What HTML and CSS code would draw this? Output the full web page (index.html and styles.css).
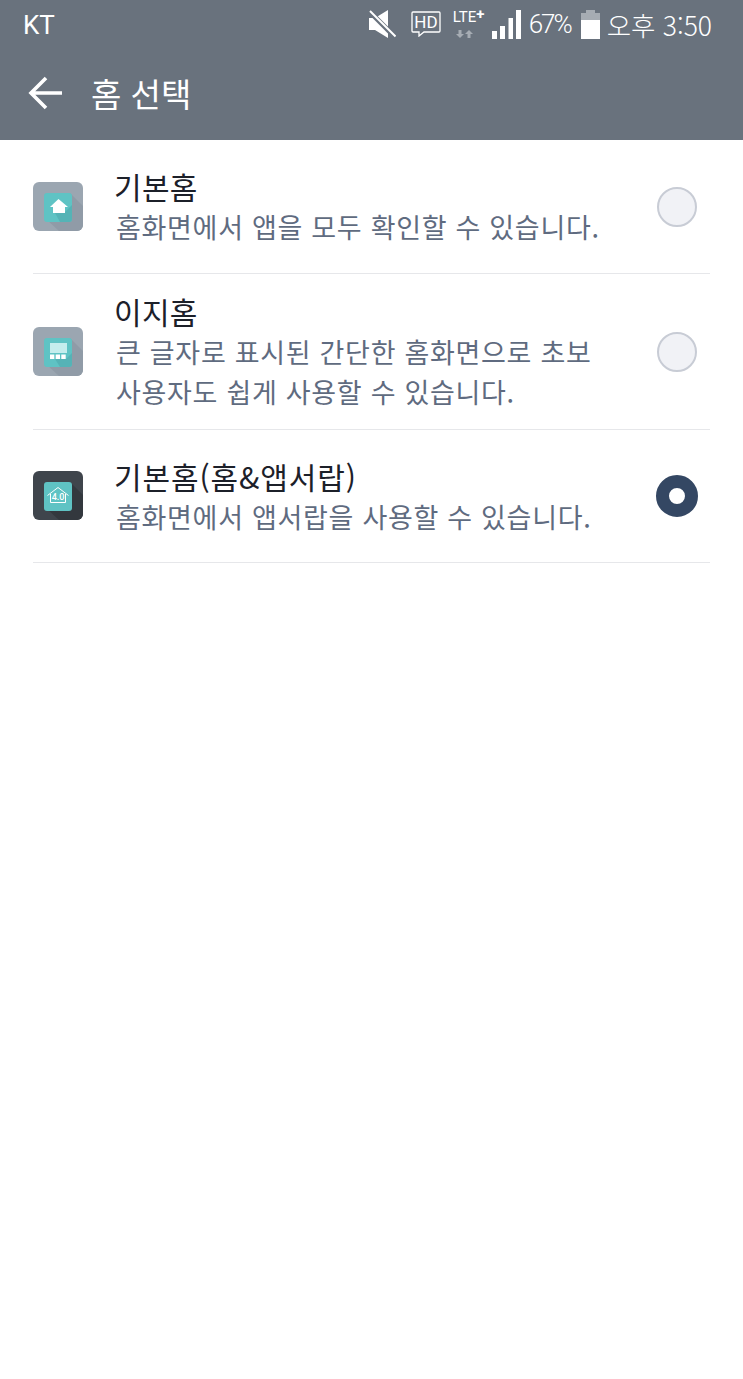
FILE: index.html
```html
<!DOCTYPE html>
<html lang="ko">
<head>
    <meta charset="utf-8">
    <meta name="viewport" content="width=device-width, initial-scale=1">
    <title>홈 선택</title>
    <link rel="stylesheet" href="styles.css">
</head>
<body>
    <header class="top">
        <div class="status">
            <span class="carrier">KT</span>
            <div class="status-right">
                <svg class="ic-mute" width="27" height="28" viewBox="0 0 27 28">
                    <path d="M0 8h6l13-8v28L6 20H0z" fill="#fff"/>
                    <path d="M0 1l26 26" stroke="#69727d" stroke-width="5"/>
                    <path d="M1 1l25.500 25.500" stroke="#fff" stroke-width="2"/>
                </svg>
                <svg class="ic-hd" width="30" height="26" viewBox="0 0 30 26">
                    <path d="M2 1h26a1 1 0 0 1 1 1v18a1 1 0 0 1-1 1H13l-5 4v-4H2a1 1 0 0 1-1-1V2a1 1 0 0 1 1-1z" fill="none" stroke="#fff" stroke-width="1.300"/>
                    <text x="15" y="17" text-anchor="middle" class="hd-text">HD</text>
                </svg>
                <div class="lte">
                    <span class="lte-text">LTE<b>+</b></span>
                    <svg class="lte-arrows" width="17" height="8" viewBox="0 0 17 8">
                        <path d="M2.500 0h3v4H8L4 8 0 4h2.500zM11.500 8h3V4H17l-4-4-4 4h2.500z" fill="#a6acb3"/>
                    </svg>
                </div>
                <svg class="ic-signal" width="29" height="29" viewBox="0 0 29 29">
                    <path d="M0 21h5v8H0zM8 16h5v13H8zM16.500 8h4.500v21h-4.500zM24 0h5v29h-5z" fill="#fff"/>
                </svg>
                <span class="pct">67%</span>
                <svg class="ic-batt" width="19" height="29" viewBox="0 0 19 29">
                    <path d="M5 0h9v3h5v7H0V3h5z" fill="#a6acb3"/>
                    <path d="M0 10h19v19H0z" fill="#fff"/>
                </svg>
                <span class="clock">오후 3:50</span>
            </div>
        </div>
        <div class="appbar">
            <svg class="ic-back" width="36" height="34" viewBox="0 0 36 34">
                <path d="M34 17H4M18 2L3 17l15 15" fill="none" stroke="#fff" stroke-width="3.600"/>
            </svg>
            <h1 class="title">홈 선택</h1>
        </div>
    </header>

    <ul class="list">
        <li class="row row-a">
            <svg class="app-icon" width="50" height="50" viewBox="0 0 50 50">
                <rect width="50" height="49" rx="6" fill="#9ba6b1"/>
                <path d="M37 11l13 13v19a6 6 0 0 1-6 6H26L13 37z" fill="#909ba7"/>
                <rect x="11" y="11" width="28" height="29" rx="3" fill="#5fc3c4"/>
                <path d="M22 31h9l8-8v14a3 3 0 0 1-3 3H27z" fill="#55b3b6"/>
                <path d="M25.500 17l9.500 8h-3v6H20v-6h-3z" fill="#fff"/>
            </svg>
            <div class="text">
                <div class="name">기본홈</div>
                <div class="desc">홈화면에서 앱을 모두 확인할 수 있습니다.</div>
            </div>
            <span class="radio"></span>
        </li>
        <li class="row row-b">
            <svg class="app-icon" width="50" height="50" viewBox="0 0 50 50">
                <rect width="50" height="49" rx="6" fill="#9ba6b1"/>
                <path d="M37 11l13 13v19a6 6 0 0 1-6 6H26L13 37z" fill="#909ba7"/>
                <rect x="11" y="11" width="28" height="29" rx="3" fill="#5fc3c4"/>
                <path d="M22 32h11l6-6v11a3 3 0 0 1-3 3H27z" fill="#55b3b6"/>
                <rect x="17" y="16" width="17" height="10" fill="#c4eded"/>
                <path d="M17 27.500h4.300V32H17zM22.700 27.500H27V32h-4.300zM28.300 27.500h4.400V32h-4.400z" fill="#fff"/>
            </svg>
            <div class="text">
                <div class="name">이지홈</div>
                <div class="desc">큰 글자로 표시된 간단한 홈화면으로 초보<br>사용자도 쉽게 사용할 수 있습니다.</div>
            </div>
            <span class="radio"></span>
        </li>
        <li class="row row-c">
            <svg class="app-icon" width="50" height="50" viewBox="0 0 50 50">
                <rect width="50" height="49" rx="6" fill="#3f454c"/>
                <path d="M37 11l13 13v19a6 6 0 0 1-6 6H26L13 37z" fill="#33383e"/>
                <rect x="11" y="11" width="28" height="29" rx="3" fill="#5fc3c4"/>
                <path d="M14.500 24.500L25 16.500l10.500 8M17.500 23v8.500h15V23" fill="none" stroke="#fff" stroke-width="1"/>
                <text x="25" y="29" text-anchor="middle" class="ver-text">4.0</text>
            </svg>
            <div class="text">
                <div class="name name-wide">기본홈(홈&amp;앱서랍)</div>
                <div class="desc">홈화면에서 앱서랍을 사용할 수 있습니다.</div>
            </div>
            <span class="radio radio-on"></span>
        </li>
    </ul>
</body>
</html>
```

FILE: styles.css
```css
* {
    box-sizing: border-box;
}

body {
    margin: 0;
    background-color: #fff;
    font-family: "Noto Sans CJK KR", "Noto Sans", sans-serif;
}

.top {
    height: 140px;
    background-color: #69727d;
    color: #fff;
}

.status {
    height: 50px;
    padding: 0 31px 0 23px;
    display: flex;
    align-items: center;
    justify-content: space-between;
}

.carrier {
    font-family: "Roboto", sans-serif;
    font-size: 26px;
}

.status-right {
    margin-bottom: 2px;
    display: flex;
    align-items: center;
}

.ic-mute {
    margin-right: 15px;
}

.ic-hd {
    margin-right: 12px;
}

.hd-text {
    font-family: "Roboto", sans-serif;
    font-size: 17px;
    fill: #fff;
}

.lte {
    width: 39px;
    display: flex;
    flex-direction: column;
    align-items: flex-start;
    line-height: 1;
}

.lte-text {
    font-family: "Roboto", sans-serif;
    font-size: 15px;
    white-space: nowrap;
}

.lte-text b {
    position: relative;
    top: -3px;
}

.lte-arrows {
    margin: 5px 0 0 3px;
}

.ic-signal {
    margin-right: 8px;
}

.pct {
    width: 42px;
    font-family: "Roboto", sans-serif;
    font-size: 26px;
    font-weight: 300;
    letter-spacing: -2px;
    margin-right: 10px;
}

.ic-batt {
    margin-right: 7px;
}

.clock {
    font-size: 26.500px;
    font-weight: 300;
    white-space: nowrap;
}

.appbar {
    height: 90px;
    padding: 0 0 5px 28px;
    display: flex;
    align-items: center;
}

.ic-back {
    margin-right: 27px;
}

.title {
    margin: 0;
    font-size: 33px;
    font-weight: 400;
}

.list {
    list-style: none;
    margin: 0;
    padding: 0 33px;
}

.row {
    display: flex;
    align-items: center;
    border-bottom: 1px solid #e6e7ea;
}

.row-a {
    height: 134px;
}

.row-b {
    height: 156px;
}

.row-c {
    height: 133px;
}

.app-icon {
    flex: none;
    margin-right: 31px;
}

.ver-text {
    font-family: "Roboto", sans-serif;
    font-size: 9px;
    font-weight: 500;
    fill: #fff;
}

.text {
    flex: 1;
}

.name {
    font-size: 30px;
    line-height: 41px;
    letter-spacing: 0.300px;
    color: #1c2029;
}

.name-wide {
    letter-spacing: 0.900px;
}

.desc {
    padding-left: 2px;
    font-size: 27px;
    line-height: 40px;
    letter-spacing: 0.700px;
    color: #5f6b80;
    white-space: nowrap;
}

.radio {
    flex: none;
    width: 40px;
    height: 40px;
    margin-right: 13px;
    border-radius: 50%;
    border: 2px solid #c8ccd5;
    background-color: #f1f2f6;
}

.radio-on {
    width: 42px;
    height: 42px;
    margin-right: 12px;
    border: 13px solid #344763;
    background-color: #fff;
}
```
